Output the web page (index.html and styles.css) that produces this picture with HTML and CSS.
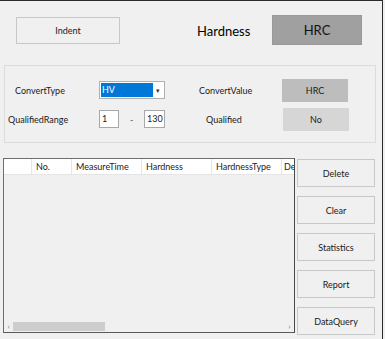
FILE: index.html
```html
<!DOCTYPE html>
<html>
<head>
<meta charset="utf-8">
<link rel="stylesheet" href="styles.css">
</head>
<body>
<div class="window">
  <div class="toprow">
    <button class="btn indent">Indent</button>
    <span class="hardness">Hardness</span>
    <div class="hrcbox">HRC</div>
  </div>
  <div class="group">
    <div class="grow r1">
      <span class="lbl ct">ConvertType</span>
      <div class="combo"><span class="sel">HV</span><span class="arrow">&#9662;</span></div>
      <span class="lbl cv">ConvertValue</span>
      <div class="val hrc2">HRC</div>
    </div>
    <div class="grow r2">
      <span class="lbl qr">QualifiedRange</span>
      <div class="inp in1">1</div>
      <span class="dash">-</span>
      <div class="inp in2">130</div>
      <span class="lbl q">Qualified</span>
      <div class="val no">No</div>
    </div>
  </div>
  <div class="main">
    <div class="table">
      <div class="thead">
        <div class="th c0"></div>
        <div class="th c1">No.</div>
        <div class="th c2">MeasureTime</div>
        <div class="th c3">Hardness</div>
        <div class="th c4">HardnessType</div>
        <div class="th c5">De</div>
      </div>
      <div class="tbody"></div>
      <div class="hscroll">
        <span class="sarrow">&#8249;</span>
        <div class="track"><div class="thumb"></div></div>
        <span class="sarrow">&#8250;</span>
      </div>
    </div>
    <div class="side">
      <button class="btn sbtn">Delete</button>
      <button class="btn sbtn">Clear</button>
      <button class="btn sbtn">Statistics</button>
      <button class="btn sbtn">Report</button>
      <button class="btn sbtn">DataQuery</button>
    </div>
  </div>
</div>
</body>
</html>
```
FILE: styles.css
```css
* { box-sizing: border-box; }
html, body { margin: 0; padding: 0; background: #f0f0f0; }
body {
  font-family: Lato, "Open Sans", sans-serif;
  font-size: 9px;
  color: #1a1a1a;
  width: 385px;
  height: 339px;
  overflow: hidden;
}
.window {
  width: 383px;
  height: 339px;
  border-top: 1px solid #2a2a2a;
  border-right: 1px solid #2a2a2a;
  background: #f0f0f0;
}
.btn {
  font-family: inherit;
  font-size: 9px;
  color: #1a1a1a;
  background: #f0f0f0;
  border: 1px solid #c8c8c8;
  padding: 0;
}
.toprow {
  display: flex;
  align-items: flex-start;
  height: 64px;
  padding-top: 14px;
}
.indent {
  margin-left: 16px;
  margin-top: 2px;
  width: 104px;
  height: 27px;
}
.hardness {
  margin-left: 77px;
  width: 75px;
  margin-top: 8px;
  font-size: 13px;
  font-weight: 400;
  color: #000;
  white-space: nowrap;
}
.hrcbox {
  width: 90px;
  height: 30px;
  background: #a0a0a0;
  border: 1px solid #999;
  display: flex;
  align-items: center;
  justify-content: center;
  font-size: 13px;
  color: #111;
}
.group {
  margin-left: 4px;
  width: 372px;
  height: 78px;
  border: 1px solid #dcdcdc;
}
.grow {
  display: flex;
  align-items: center;
  height: 24px;
}
.r1 { margin-top: 12px; }
.r2 { margin-top: 5px; }
.lbl { white-space: nowrap; }
.ct { margin-left: 10px; width: 84px; }
.combo {
  width: 66px;
  height: 18px;
  border: 1px solid #b0b0b0;
  background: #fff;
  display: flex;
  padding: 1px;
}
.sel {
  flex: 1;
  background: #0078d7;
  color: #fff;
  font-size: 9px;
  line-height: 14px;
  padding-left: 1px;
}
.arrow {
  width: 10px;
  text-align: center;
  font-size: 7px;
  line-height: 14px;
  color: #333;
}
.cv { margin-left: 34px; width: 83px; }
.val {
  width: 66px;
  height: 23px;
  display: flex;
  align-items: center;
  justify-content: center;
  font-size: 9px;
}
.hrc2 { background: #bdbdbd; }
.qr { margin-left: 3px; width: 91px; }
.inp {
  height: 18px;
  background: #fff;
  border: 1px solid #a8a8a8;
  font-size: 9px;
  line-height: 16px;
  padding-left: 2px;
}
.in1 { width: 20px; }
.dash { margin-left: 11px; width: 14px; color: #555; }
.in2 { width: 21px; }
.q { margin-left: 41px; width: 77px; }
.no { background: #d6d6d6; }

.main {
  display: flex;
  margin-top: 15px;
  align-items: flex-start;
}
.table {
  margin-left: 3px;
  width: 292px;
  height: 175px;
  border: 1px solid #6e6e6e;
  border-right-color: #4a4a4a;
  border-bottom-color: #5a5a5a;
  background: #f0f0f0;
  display: flex;
  flex-direction: column;
  overflow: hidden;
}
.thead {
  display: flex;
  height: 16px;
  background: #fff;
  border-bottom: 1px solid #e5e5e5;
  flex: none;
}
.th {
  flex: none;
  height: 16px;
  line-height: 16px;
  padding-left: 4px;
  border-right: 1px solid #e5e5e5;
  white-space: nowrap;
  overflow: hidden;
  color: #222;
}
.c0 { width: 28px; }
.c1 { width: 40px; }
.c2 { width: 70px; }
.c3 { width: 70px; }
.c4 { width: 70px; }
.c5 { width: 12px; padding-left: 2px; border-right: none; }
.tbody { flex: 1; }
.hscroll {
  flex: none;
  height: 11px;
  display: flex;
  align-items: center;
  background: #f0f0f0;
}
.sarrow {
  width: 9px;
  text-align: center;
  font-size: 8px;
  color: #777;
  line-height: 11px;
}
.track { flex: 1; height: 9px; }
.thumb {
  width: 92px;
  height: 9px;
  background: #cdcdcd;
}
.side {
  display: flex;
  flex-direction: column;
  gap: 9px;
  margin-left: 2px;
  margin-top: 1px;
}
.sbtn {
  width: 78px;
  height: 28px;
}
```
